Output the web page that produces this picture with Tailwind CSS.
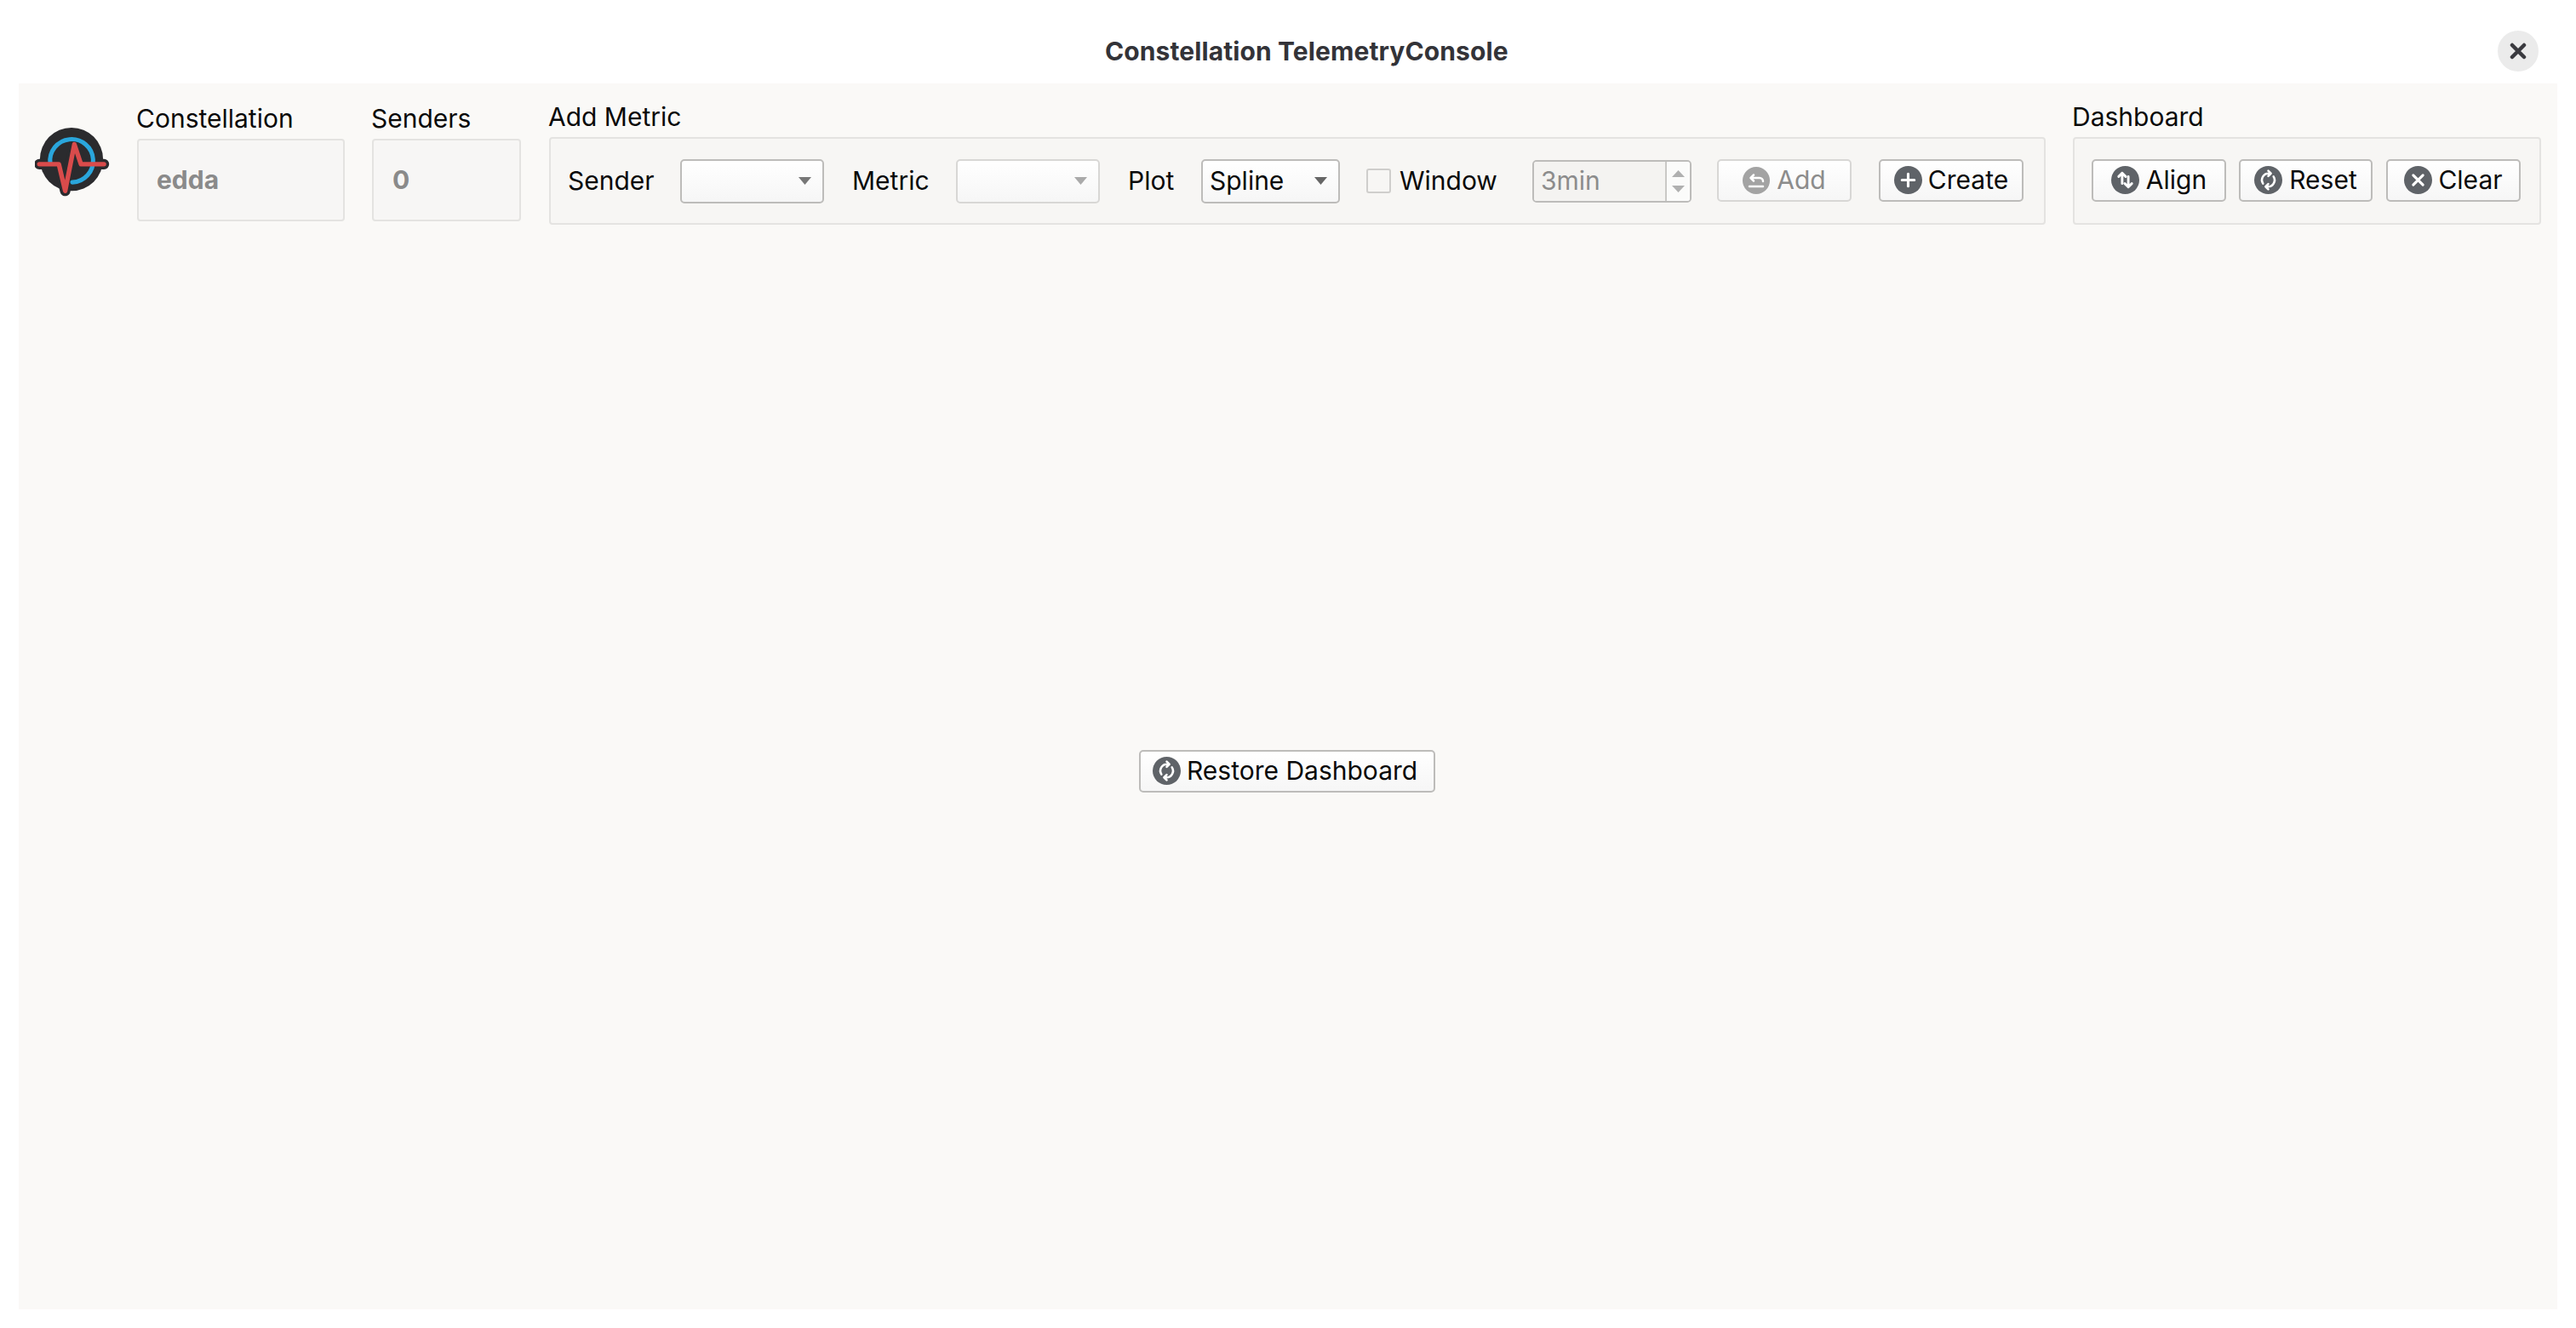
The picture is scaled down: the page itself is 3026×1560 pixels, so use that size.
<!DOCTYPE html>
<html>
<head>
<meta charset="utf-8">
<script src="https://cdn.jsdelivr.net/npm/@tailwindcss/browser@4"></script>
</head>
<body class="bg-white font-['Inter','Liberation_Sans',sans-serif] text-[30px] text-[#0a0a0a]">
<div class="w-[3026px] h-[1560px] flex flex-col overflow-hidden">
  <header class="h-[98px] flex items-center shrink-0">
    <h1 class="ml-[1298px] mt-[21px] text-[30px] leading-[36px] font-bold tracking-[0.1px] text-[#333338] whitespace-nowrap">Constellation TelemetryConsole</h1>
    <div class="ml-auto mr-[44px] mt-[22px] w-[48px] h-[48px] rounded-full bg-[#ebebeb] flex items-center justify-center">
      <svg width="20" height="20" viewBox="0 0 20 20"><path d="M3 3L17 17M17 3L3 17" stroke="#3a3a3f" stroke-width="4.500" stroke-linecap="round"/></svg>
    </div>
  </header>
  <main class="mx-[22px] h-[1440px] bg-[#faf9f7] flex flex-col">
    <div class="flex items-start shrink-0">
      <svg class="ml-[19px] mt-[52px] shrink-0" width="88" height="81" viewBox="95 60 260 240">
        <circle cx="222" cy="170" r="110" fill="#2b2b2e"/>
        <polyline points="110,187 178,187 200,280 232,118 255,187 335,187" fill="none" stroke="#2b2b2e" stroke-width="36" stroke-linecap="round" stroke-linejoin="round"/>
        <path d="M148 185A75 75 0 1 1 225 250" fill="none" stroke="#2aa6dc" stroke-width="15" stroke-linecap="round"/>
        <polyline points="110,187 178,187 200,280 232,118 255,187 335,187" fill="none" stroke="#d94b4b" stroke-width="16" stroke-linecap="round" stroke-linejoin="round"/>
      </svg>
      <section class="ml-[31px] pt-[23px] w-[245px]">
        <div class="h-[36px] leading-[36px] whitespace-nowrap">Constellation</div>
        <div class="mt-[6px] ml-[1px] h-[97px] w-[244px] bg-[#f7f6f5] border-2 border-[#e4e3e1] rounded-[4px] flex items-center pl-[21px] font-bold text-[#8a8a8a]">edda</div>
      </section>
      <section class="ml-[31px] pt-[23px] w-[176px]">
        <div class="h-[36px] leading-[36px] whitespace-nowrap">Senders</div>
        <div class="mt-[6px] ml-[1px] h-[97px] w-[175px] bg-[#f7f6f5] border-2 border-[#e4e3e1] rounded-[4px] flex items-center pl-[22px] font-bold text-[#8a8a8a]">0</div>
      </section>
      <section class="ml-[32px] pt-[21px]">
        <div class="h-[36px] leading-[36px] whitespace-nowrap">Add Metric</div>
        <div class="mt-[6px] ml-[1px] h-[103px] w-[1758px] bg-[#f7f6f4] border-2 border-[#e4e3e1] rounded-[4px] flex items-center pl-[20px]">
          <span class="w-[132px] shrink-0">Sender</span>
          <div class="w-[169px] h-[52px] shrink-0 rounded-[5px] border-2 border-[#bdbcba] bg-linear-to-b from-white to-[#f6f6f6] flex items-center justify-end pr-[13px]">
            <svg width="15" height="9" viewBox="0 0 15 9"><path d="M0 0H15L7.500 9Z" fill="#777"/></svg>
          </div>
          <span class="ml-[33px] w-[122px] shrink-0">Metric</span>
          <div class="w-[169px] h-[52px] shrink-0 rounded-[5px] border-2 border-[#d8d7d5] bg-linear-to-b from-white to-[#f6f6f6] flex items-center justify-end pr-[13px]">
            <svg width="15" height="9" viewBox="0 0 15 9"><path d="M0 0H15L7.500 9Z" fill="#aaa"/></svg>
          </div>
          <span class="ml-[33px] w-[86px] shrink-0">Plot</span>
          <div class="w-[163px] h-[52px] shrink-0 rounded-[5px] border-2 border-[#bdbcba] bg-linear-to-b from-white to-[#f6f6f6] flex items-center justify-between pl-[8px] pr-[13px]">
            <span>Spline</span>
            <svg width="15" height="9" viewBox="0 0 15 9"><path d="M0 0H15L7.500 9Z" fill="#666"/></svg>
          </div>
          <div class="ml-[31px] w-[29px] h-[29px] shrink-0 rounded-[3px] border-2 border-[#cfcecc] bg-[#f7f6f4]"></div>
          <span class="ml-[10px] w-[156px] shrink-0">Window</span>
          <div class="w-[187px] h-[50px] shrink-0 rounded-[5px] border-2 border-[#bdbcba] flex overflow-hidden">
            <div class="w-[156px] border-r-2 border-[#c9c8c6] bg-[#f4f3f1] flex items-center pl-[8px] text-[#8c8c8c]">3min</div>
            <div class="flex-1 bg-[#fbfbfa] flex flex-col items-center justify-center gap-[10px]">
              <svg width="15" height="8" viewBox="0 0 15 8"><path d="M0 8H15L7.500 0Z" fill="#b0b0b0"/></svg>
              <svg width="15" height="8" viewBox="0 0 15 8"><path d="M0 0H15L7.500 8Z" fill="#b0b0b0"/></svg>
            </div>
          </div>
          <div class="ml-[30px] mb-[2px] w-[158px] h-[50px] shrink-0 rounded-[5px] border-2 border-[#d8d7d5] bg-linear-to-b from-white to-[#f6f6f6] flex items-center justify-center gap-[8px] text-[#8c8c8c]">
            <svg width="32" height="32" viewBox="0 0 32 32"><circle cx="16" cy="16" r="16" fill="#a3a3a3"/><path d="M8 23H24M10 13H20a4 4 0 0 1 4 4M13 9.500L9.500 13L13 16.500" fill="none" stroke="#fff" stroke-width="2.500" stroke-linecap="round" stroke-linejoin="round"/></svg>
            <span>Add</span>
          </div>
          <div class="ml-[32px] mb-[2px] w-[170px] h-[50px] shrink-0 rounded-[5px] border-2 border-[#bdbcba] bg-linear-to-b from-white to-[#f6f6f6] flex items-center justify-center gap-[7px]">
            <svg width="33" height="33" viewBox="0 0 32 32"><circle cx="16" cy="16" r="16" fill="#5f6368"/><path d="M16 9V23M9 16H23" stroke="#fff" stroke-width="3" stroke-linecap="round"/></svg>
            <span>Create</span>
          </div>
        </div>
      </section>
      <section class="ml-[31px] pt-[21px]">
        <div class="h-[36px] leading-[36px] whitespace-nowrap">Dashboard</div>
        <div class="mt-[6px] ml-[1px] h-[103px] w-[550px] bg-[#f7f6f4] border-2 border-[#e4e3e1] rounded-[4px] flex items-center pl-[20px]">
          <div class="mb-[2px] w-[158px] h-[50px] shrink-0 rounded-[5px] border-2 border-[#bdbcba] bg-linear-to-b from-white to-[#f6f6f6] flex items-center justify-center gap-[8px]">
            <svg width="33" height="33" viewBox="0 0 32 32"><circle cx="16" cy="16" r="16" fill="#5f6368"/><path d="M12.500 20V8M8.500 12L12.500 8L16.500 12M19.500 12V24M15.500 20L19.500 24L23.500 20" fill="none" stroke="#fff" stroke-width="2.800" stroke-linecap="round" stroke-linejoin="round"/></svg>
            <span>Align</span>
          </div>
          <div class="ml-[15px] mb-[2px] w-[157px] h-[50px] shrink-0 rounded-[5px] border-2 border-[#bdbcba] bg-linear-to-b from-white to-[#f6f6f6] flex items-center justify-center gap-[8px]">
            <svg width="33" height="33" viewBox="0 0 32 32"><circle cx="16" cy="16" r="16" fill="#5f6368"/><path d="M10 20a7.500 7.500 0 0 1 7-11.500M22 12a7.500 7.500 0 0 1-7 11.500M16 5.500L19 8.500L16 11.500M16 20.500L13 23.500L16 26.500" fill="none" stroke="#fff" stroke-width="2.500" stroke-linecap="round" stroke-linejoin="round"/></svg>
            <span>Reset</span>
          </div>
          <div class="ml-[16px] mb-[2px] w-[158px] h-[50px] shrink-0 rounded-[5px] border-2 border-[#bdbcba] bg-linear-to-b from-white to-[#f6f6f6] flex items-center justify-center gap-[7px]">
            <svg width="33" height="33" viewBox="0 0 32 32"><circle cx="16" cy="16" r="16" fill="#5f6368"/><path d="M10.500 10.500L21.500 21.500M21.500 10.500L10.500 21.500" stroke="#fff" stroke-width="3" stroke-linecap="round"/></svg>
            <span>Clear</span>
          </div>
        </div>
      </section>
    </div>
    <div class="flex-1 flex items-center justify-center pt-[9px] pr-[2px]">
      <div class="w-[348px] h-[50px] rounded-[5px] border-2 border-[#bdbcba] bg-linear-to-b from-white to-[#f6f6f6] flex items-center pl-[14px] gap-[7px] whitespace-nowrap">
        <svg width="33" height="33" viewBox="0 0 32 32"><circle cx="16" cy="16" r="16" fill="#5f6368"/><path d="M10 20a7.500 7.500 0 0 1 7-11.500M22 12a7.500 7.500 0 0 1-7 11.500M16 5.500L19 8.500L16 11.500M16 20.500L13 23.500L16 26.500" fill="none" stroke="#fff" stroke-width="2.500" stroke-linecap="round" stroke-linejoin="round"/></svg>
        <span>Restore Dashboard</span>
      </div>
    </div>
  </main>
</div>
</body>
</html>
